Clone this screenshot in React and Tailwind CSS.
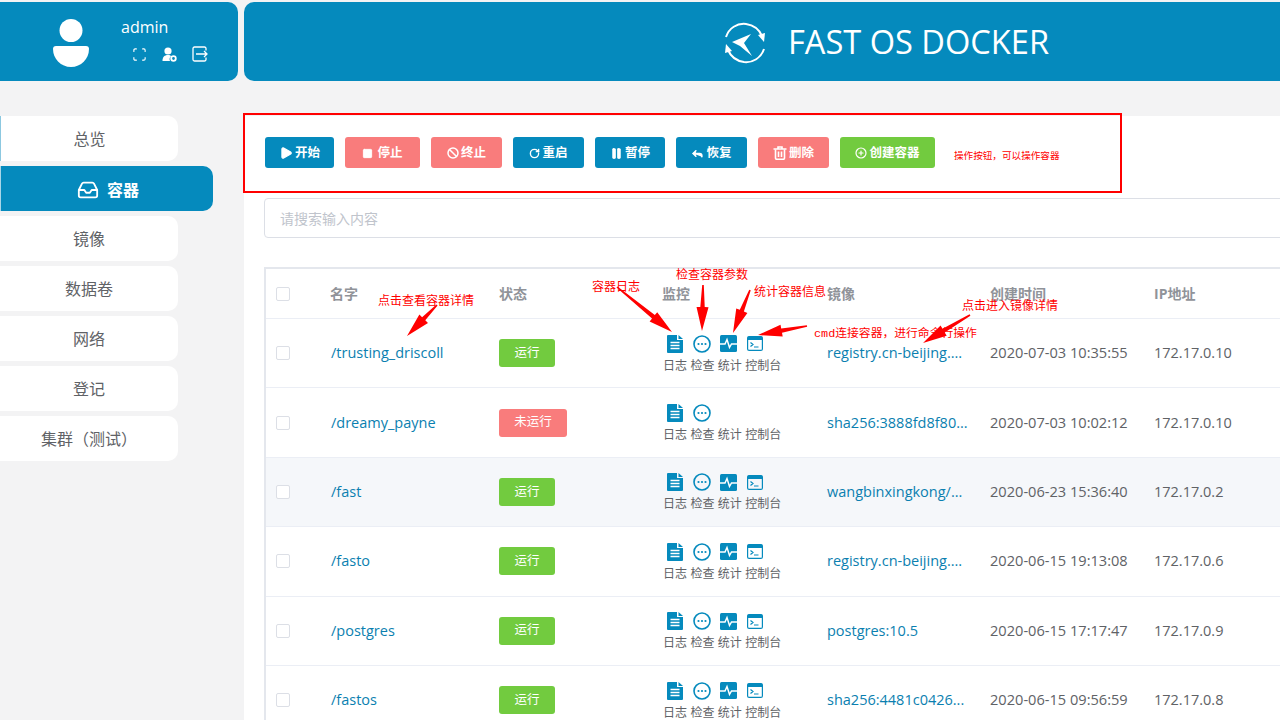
import React from "react";
import { Play, Square, Ban, RotateCw, Pause, Reply, CirclePlus, Inbox, Scan } from "lucide-react";

const FONT = "font-['Open_Sans','Noto_Sans_CJK_SC',sans-serif]";

const navItems = ["总览", "容器", "镜像", "数据卷", "网络", "登记", "集群（测试）"];

const TrashIcon = () => (
  <svg width="14" height="14" viewBox="0 0 14 14" fill="none" stroke="currentColor" strokeWidth="1.600">
    <path d="M0.500 3h13M5 3V1h4v2" />
    <path d="M2.500 3.500v8.500a1.200 1.200 0 0 0 1.200 1.200h6.600a1.200 1.200 0 0 0 1.200-1.200V3.500M5.500 5.500v5.500M8.500 5.500v5.500" />
  </svg>
);

const actions = [
  { label: "开始", w: "w-[69px]", color: "bg-[#058abd]", icon: <Play size={14} fill="currentColor" strokeWidth={2} /> },
  { label: "停止", w: "w-[75px]", color: "bg-[#f97c7c]", icon: <Square size={11} fill="currentColor" strokeWidth={2} />, gap: "gap-[4px]" },
  { label: "终止", w: "w-[71px]", color: "bg-[#f97c7c]", icon: <Ban size={12} strokeWidth={3} /> },
  { label: "重启", w: "w-[71px]", color: "bg-[#058abd]", icon: <RotateCw size={11} strokeWidth={3} /> },
  { label: "暂停", w: "w-[70px]", color: "bg-[#058abd]", icon: <Pause size={13} fill="currentColor" strokeWidth={1.5} /> },
  { label: "恢复", w: "w-[71px]", color: "bg-[#058abd]", icon: <Reply size={13} fill="currentColor" strokeWidth={3} /> },
  { label: "删除", w: "w-[71px]", color: "bg-[#f97c7c]", icon: <TrashIcon /> },
  { label: "创建容器", w: "w-[95px]", color: "bg-[#72cb3f]", icon: <CirclePlus size={12} strokeWidth={2.4} /> },
];

const rows = [
  { name: "/trusting_driscoll", running: true, image: "registry.cn-beijing....", time: "2020-07-03 10:35:55", ip: "172.17.0.10" },
  { name: "/dreamy_payne", running: false, image: "sha256:3888fd8f80...", time: "2020-07-03 10:02:12", ip: "172.17.0.10" },
  { name: "/fast", running: true, image: "wangbinxingkong/...", time: "2020-06-23 15:36:40", ip: "172.17.0.2" },
  { name: "/fasto", running: true, image: "registry.cn-beijing....", time: "2020-06-15 19:13:08", ip: "172.17.0.6" },
  { name: "/postgres", running: true, image: "postgres:10.5", time: "2020-06-15 17:17:47", ip: "172.17.0.9" },
  { name: "/fastos", running: true, image: "sha256:4481c0426...", time: "2020-06-15 09:56:59", ip: "172.17.0.8" },
];

const Logo = () => (
  <svg width="46" height="46" viewBox="0 0 46 46" fill="none">
    <path d="M4 17C7 8 15 3 24 4c7 1 13 5 16 12" stroke="#fff" strokeWidth="2" />
    <path d="M36 15l7-2-1 9z" fill="#fff" />
    <path d="M42 29c-3 9-11 14-20 13-7-1-13-5-16-12" stroke="#fff" strokeWidth="2" />
    <path d="M10 31l-7 2 1-9z" fill="#fff" />
    <path d="M10 22l19-8-7 9 8 13-12-10z" fill="#fff" />
  </svg>
);

const Avatar = () => (
  <svg width="38" height="48" viewBox="0 0 38 48" fill="#fff">
    <circle cx="19" cy="11.5" r="11.5" />
    <path d="M1 30c0-2 1-3 3-3h30c2 0 3 1 3 3 0 10-8 18-18 18S1 40 1 30z" />
  </svg>
);

const UserGear = () => (
  <svg width="15" height="15" viewBox="0 0 15 15" fill="#fff">
    <circle cx="6" cy="4" r="3.6" />
    <path d="M0.5 14c0-4 2-6 5.500-6 1.500 0 2.500.4 3.300 1.100A4 4 0 0 0 8 14z" />
    <circle cx="11.500" cy="11.500" r="2.300" fill="none" stroke="#fff" strokeWidth="1.800" />
  </svg>
);

const ExitBox = () => (
  <svg width="16" height="16" viewBox="0 0 16 16" fill="none" stroke="#fff" strokeWidth="1.300">
    <path d="M14 4.500V2.500a1.500 1.500 0 0 0-1.500-1.500h-10A1.500 1.500 0 0 0 1 2.500v11A1.500 1.500 0 0 0 2.500 15h10a1.500 1.500 0 0 0 1.500-1.500v-2" />
    <path d="M4 8h11M12 5l3 3-3 3" />
  </svg>
);

const DocIcon = () => (
  <svg width="16" height="18" viewBox="0 0 16 18">
    <path d="M1 0h9v5h6v12a1 1 0 0 1-1 1H1a1 1 0 0 1-1-1V1a1 1 0 0 1 1-1z" fill="#058abd" />
    <path d="M11.500 0L16 4h-4.500z" fill="#058abd" />
    <path d="M3.500 7.500h9M3.500 10.500h9M3.500 13.500h9" stroke="#fff" strokeWidth="1.500" />
  </svg>
);

const DotsIcon = () => (
  <svg width="18" height="18" viewBox="0 0 18 18">
    <circle cx="9" cy="9" r="8" fill="none" stroke="#058abd" strokeWidth="1.600" />
    <circle cx="5.500" cy="9" r="1.100" fill="#058abd" />
    <circle cx="9" cy="9" r="1.100" fill="#058abd" />
    <circle cx="12.500" cy="9" r="1.100" fill="#058abd" />
  </svg>
);

const PulseIcon = () => (
  <svg width="17" height="17" viewBox="0 0 17 17">
    <rect width="17" height="17" rx="1.500" fill="#058abd" />
    <path d="M0 9h5l2-4.500 2.500 8 2-3.500H17" fill="none" stroke="#fff" strokeWidth="1.500" />
  </svg>
);

const ConsoleIcon = () => (
  <svg width="16" height="15" viewBox="0 0 16 15">
    <rect x="0.600" y="0.600" width="14.800" height="13.800" rx="1.500" fill="none" stroke="#058abd" strokeWidth="1.200" />
    <path d="M0.600 2a1.400 1.400 0 0 1 1.400-1.400h12A1.400 1.400 0 0 1 15.400 2v2H0.600z" fill="#058abd" />
    <path d="M3.500 6.500l2.500 2-2.500 2M7 11h4.500" fill="none" stroke="#058abd" strokeWidth="1.200" />
  </svg>
);

// hand-drawn style annotation arrow: thin tail, wide head
const arrow = (x1, y1, x2, y2) => {
  const len = Math.hypot(x2 - x1, y2 - y1);
  const ux = (x2 - x1) / len;
  const uy = (y2 - y1) / len;
  const nx = -uy;
  const ny = ux;
  const bx = x2 - ux * 24;
  const by = y2 - uy * 24;
  const p = (x, y, k) => `${x + nx * k},${y + ny * k}`;
  return [p(x1, y1, 0.8), p(bx, by, 2.2), p(bx, by, 6), `${x2},${y2}`, p(bx, by, -6), p(bx, by, -2.2), p(x1, y1, -0.8)].join(" ");
};

const arrows = [
  [617, 287, 672, 332],
  [703, 285, 702, 331],
  [750, 290, 733, 333],
  [807, 326, 758, 335],
  [970, 315, 923, 343],
  [437, 305, 407, 336],
];

const Checkbox = () => <span className="block w-[14px] h-[14px] rounded-[2px] border border-[#dcdfe6] bg-white" />;

const App = () => {
  return (
    <div className={`relative w-[1280px] h-[720px] overflow-hidden bg-[#f3f3f4] ${FONT}`}>
      {/* top bar */}
      <div className="flex gap-[6px] pt-[2px] h-[116px] bg-[#f3f3f4]">
        <div className="flex shrink-0 w-[238px] h-[79px] pl-[52px] pt-[17px] bg-[#058abd] rounded-r-[10px] text-white">
          <Avatar />
          <div className="ml-[31px]">
            <div className="text-[16px] leading-[18px] -mt-[1px]">admin</div>
            <div className="flex items-center gap-[15px] mt-[10px] ml-[11px]">
              <Scan size={15} strokeWidth={1.8} />
              <UserGear />
              <ExitBox />
            </div>
          </div>
        </div>
        <div className="flex flex-1 items-center h-[79px] pt-[2px] pl-[478px] bg-[#058abd] rounded-l-[10px] text-white">
          <Logo />
          <span className="ml-[20px] text-[32.6px] leading-none whitespace-nowrap">FAST OS DOCKER</span>
        </div>
      </div>

      <div className="flex">
        {/* sidebar */}
        <div className="flex flex-col gap-[5px] shrink-0 w-[244px]">
          {navItems.map((item, i) =>
            i === 1 ? (
              <div key={item} className="flex items-center justify-center gap-[8px] w-[213px] h-[45px] pt-[2px] pr-[10px] pl-[12px] bg-[#058abd] rounded-r-[10px] border-l border-[#a9d6e8] text-white text-[16px] font-bold">
                <Inbox size={22} strokeWidth={2} />
                {item}
              </div>
            ) : (
              <div key={item} className={`flex items-center justify-center w-[178px] h-[45px] pt-[1px] bg-white rounded-r-[10px] text-[#606266] text-[16px] ${i === 0 ? "border-l border-[#8cc8e0]" : ""}`}>
                {item}
              </div>
            )
          )}
        </div>

        {/* content */}
        <div className="flex-1 min-w-0 h-[604px] bg-white pl-[21px]">
          <div className="flex items-center gap-[11px] pt-[21px]">
            {actions.map((a) => (
              <div key={a.label} className={`flex items-center justify-center ${a.gap || "gap-[2px]"} ${a.w} h-[31px] pt-[1px] rounded-[3px] ${a.color} text-white text-[12.5px] font-bold`}>
                {a.icon}
                {a.label}
              </div>
            ))}
          </div>

          <div className="-ml-[1px] mt-[30px] h-[40px] w-[1100px] flex items-center pl-[15px] border border-[#dcdfe6] rounded-[4px] text-[14px] text-[#c0c4cc]">
            请搜索输入内容
          </div>

          <div className="-ml-[1px] mt-[29px] w-[1100px] border-t-2 border-l-2 border-[#e4e7ed]">
            <div className="flex items-center h-[50px] border-b border-[#ebeef5] text-[14px] font-bold text-[#909399]">
              <div className="w-[64px] pl-[10px]"><Checkbox /></div>
              <div className="w-[169px]">名字</div>
              <div className="w-[163px]">状态</div>
              <div className="w-[165px]">监控</div>
              <div className="w-[163px]">镜像</div>
              <div className="w-[164px]">创建时间</div>
              <div>IP地址</div>
            </div>
            {rows.map((r, i) => (
              <div key={r.name} className={`flex items-center h-[69.4px] border-b border-[#ebeef5] text-[14.6px] text-[#606266] ${i === 2 ? "bg-[#f5f7fa]" : ""}`}>
                <div className="w-[65px] pl-[10px]"><Checkbox /></div>
                <div className="w-[168px] text-[14.5px] text-[#0b7fb0]">{r.name}</div>
                <div className="w-[163px]">
                  <div className={`flex items-center justify-center h-[28px] rounded-[3px] text-white text-[12.5px] ${r.running ? "w-[56px] bg-[#72cb3f]" : "w-[68px] bg-[#f97c7c]"}`}>
                    {r.running ? "运行" : "未运行"}
                  </div>
                </div>
                <div className="w-[165px] pt-[2px]">
                  <div className="flex items-center h-[20px]">
                    <span className="flex justify-center w-[26.5px]"><DocIcon /></span>
                    <span className="flex justify-center w-[26.5px]"><DotsIcon /></span>
                    {r.running && <span className="flex justify-center w-[26.5px]"><PulseIcon /></span>}
                    {r.running && <span className="flex justify-center w-[26.5px]"><ConsoleIcon /></span>}
                  </div>
                  <div className="flex gap-[3.4px] mt-[3px] pl-[1px] text-[12px] leading-[18px]">
                    <span>日志</span><span>检查</span><span>统计</span><span>控制台</span>
                  </div>
                </div>
                <div className="w-[163px] text-[14.5px] text-[#0b7fb0] whitespace-nowrap">{r.image}</div>
                <div className="w-[164px] whitespace-nowrap">{r.time}</div>
                <div className="text-[14.5px]">{r.ip}</div>
              </div>
            ))}
          </div>
        </div>
      </div>

      {/* red annotations drawn over the screenshot */}
      <div className="absolute left-[243px] top-[113px] w-[879px] h-[80px] border-2 border-[#ff0000]" />
      <svg className="absolute left-0 top-0" width="1280" height="720">
        {arrows.map((a, i) => (
          <polygon key={i} points={arrow(...a)} fill="#ff0000" />
        ))}
      </svg>
      <span className="absolute left-[954px] top-[149px] text-[9.6px] leading-[14px] text-[#ff0000] whitespace-nowrap">操作按钮，可以操作容器</span>
      <span className="absolute left-[378px] top-[293px] text-[12px] leading-[16px] text-[#ff0000] whitespace-nowrap">点击查看容器详情</span>
      <span className="absolute left-[592px] top-[279px] text-[12px] leading-[16px] text-[#ff0000] whitespace-nowrap">容器日志</span>
      <span className="absolute left-[676px] top-[267px] text-[12px] leading-[16px] text-[#ff0000] whitespace-nowrap">检查容器参数</span>
      <span className="absolute left-[754px] top-[284px] text-[12px] leading-[16px] text-[#ff0000] whitespace-nowrap">统计容器信息</span>
      <span className="absolute left-[814px] top-[326px] text-[11.8px] leading-[16px] text-[#ff0000] whitespace-nowrap font-['Liberation_Mono','Noto_Sans_CJK_SC',monospace]">cmd连接容器，进行命令行操作</span>
      <span className="absolute left-[962px] top-[298px] text-[12px] leading-[16px] text-[#ff0000] whitespace-nowrap">点击进入镜像详情</span>
    </div>
  );
};

export default App;
